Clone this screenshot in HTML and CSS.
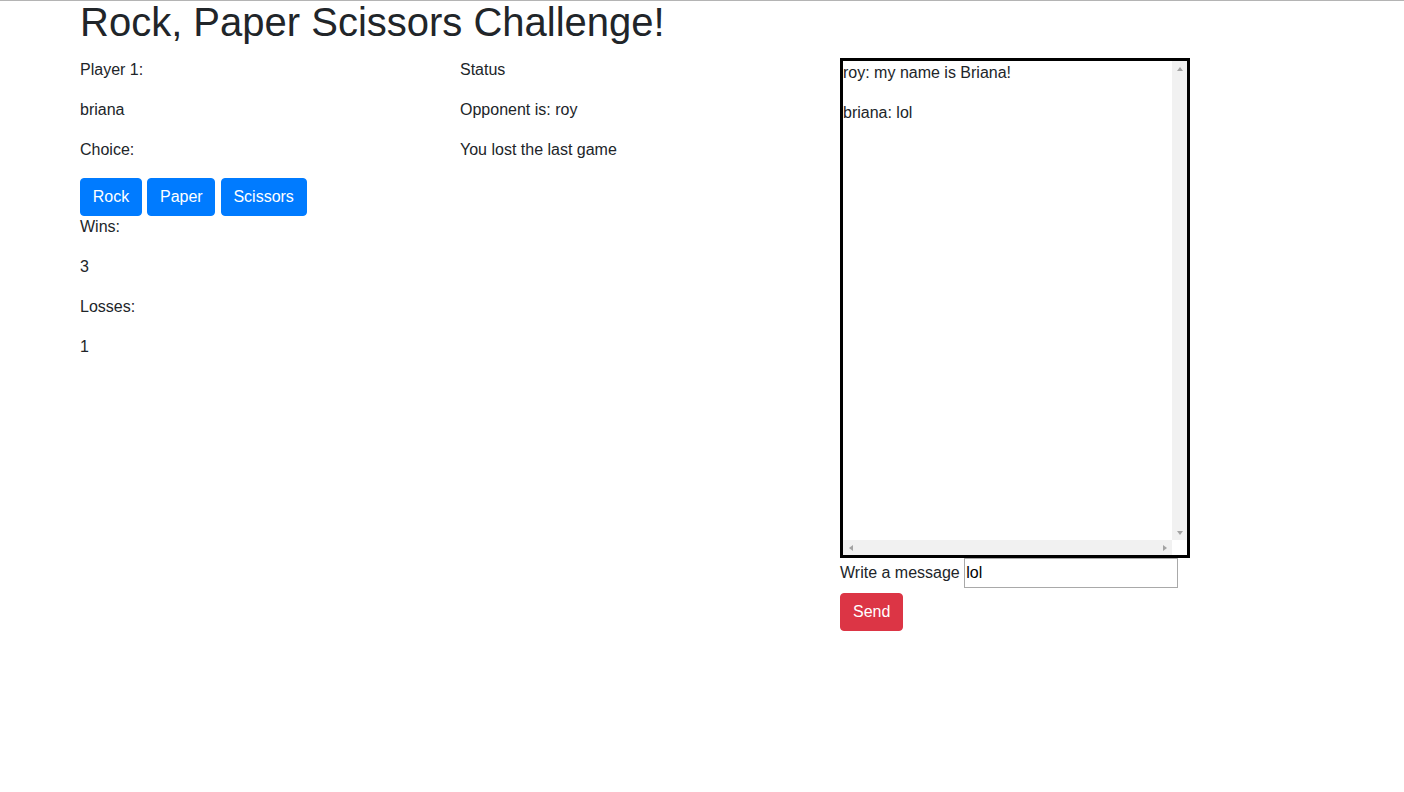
FILE: index.html
```html
<!DOCTYPE html>
<html>
<head>
<meta charset="utf-8">
<title>Rock, Paper Scissors Challenge!</title>
<link rel="stylesheet" href="styles.css">
</head>
<body>
<div class="page">
  <h1 class="title">Rock, Paper Scissors Challenge!</h1>
  <div class="row">
    <div class="col">
      <p>Player 1:</p>
      <p>briana</p>
      <p>Choice:</p>
      <div class="choices">
        <button class="btn btn-primary">Rock</button>
        <button class="btn btn-primary">Paper</button>
        <button class="btn btn-primary">Scissors</button>
      </div>
      <p>Wins:</p>
      <p>3</p>
      <p>Losses:</p>
      <p>1</p>
    </div>
    <div class="col">
      <p>Status</p>
      <p>Opponent is: roy</p>
      <p>You lost the last game</p>
    </div>
    <div class="col">
      <div class="chat-box">
        <div class="chat-messages">
          <p>roy: my name is Briana!</p>
          <p>briana: lol</p>
        </div>
        <div class="vscroll">
          <span class="sb-btn"><span class="tri tri-up"></span></span>
          <span class="sb-btn"><span class="tri tri-down"></span></span>
        </div>
        <div class="hscroll">
          <span class="sb-btn"><span class="tri tri-left"></span></span>
          <span class="sb-btn"><span class="tri tri-right"></span></span>
        </div>
        <div class="corner"></div>
      </div>
      <div class="chat-form">
        <label for="msg">Write a message</label> <input id="msg" class="msg-input" type="text" value="lol">
      </div>
      <button class="btn btn-danger send">Send</button>
    </div>
  </div>
</div>
</body>
</html>
```
FILE: styles.css
```css
*, *::before, *::after { box-sizing: border-box; }

html, body {
  margin: 0;
  padding: 0;
}

body {
  font-family: "Liberation Sans", Arial, sans-serif;
  font-size: 16px;
  line-height: 1.5;
  color: #212529;
  background: #fff;
  border-top: 1px solid #b4b4b4;
}

.page {
  padding: 0 80px;
}

.title {
  margin: 0 0 15px;
  font-size: 40px;
  font-weight: 500;
  line-height: 42px;
}

.row {
  display: grid;
  grid-template-columns: 380px 380px 380px;
}

p {
  margin: 0 0 16px;
}

.choices {
  display: flex;
  gap: 5.25px;
  height: 38px;
  margin: 1px 0 -1px;
}

.btn {
  display: inline-block;
  font-family: inherit;
  font-size: 16px;
  line-height: 24px;
  padding: 6px 12px;
  border: 1px solid transparent;
  border-radius: 4px;
  color: #fff;
  cursor: pointer;
}

.choices .btn {
  padding: 6px 11.75px;
}

.btn-primary {
  background: #007bff;
  border-color: #007bff;
}

.btn-danger {
  background: #dc3545;
  border-color: #dc3545;
}

.chat-box {
  width: 350px;
  height: 500px;
  border: 3px solid #000;
  display: grid;
  grid-template-columns: 1fr 15px;
  grid-template-rows: 1fr 15px;
  overflow: hidden;
}

.chat-messages {
  overflow: hidden;
}

.vscroll {
  background: #f1f1f1;
  display: flex;
  flex-direction: column;
  justify-content: space-between;
}

.hscroll {
  background: #f1f1f1;
  display: flex;
  justify-content: space-between;
}

.corner {
  background: #fff;
}

.sb-btn {
  width: 15px;
  height: 15px;
  display: flex;
  align-items: center;
  justify-content: center;
}

.tri {
  width: 0;
  height: 0;
  display: block;
}

.tri-up {
  border-left: 3.5px solid transparent;
  border-right: 3.5px solid transparent;
  border-bottom: 4px solid #a3a3a3;
}

.tri-down {
  border-left: 3.5px solid transparent;
  border-right: 3.5px solid transparent;
  border-top: 4px solid #a3a3a3;
}

.tri-left {
  border-top: 3.5px solid transparent;
  border-bottom: 3.5px solid transparent;
  border-right: 4px solid #a3a3a3;
}

.tri-right {
  border-top: 3.5px solid transparent;
  border-bottom: 3.5px solid transparent;
  border-left: 4px solid #a3a3a3;
}

.chat-form {
  line-height: 24px;
}

.msg-input {
  width: 214px;
  font-family: inherit;
  font-size: 16px;
  line-height: 24px;
  color: #000;
  padding: 2px 1px;
  border: 1px solid #a9a9a9;
  border-radius: 0;
  outline: none;
}

.send {
  margin-top: 5px;
}
```
